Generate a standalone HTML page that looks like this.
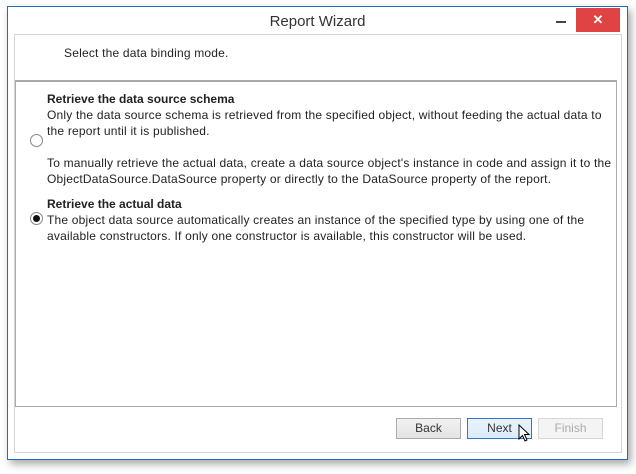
<!DOCTYPE html>
<html><head><style>
body{margin:0;width:636px;height:474px;background:#fff;position:relative;overflow:hidden;font-family:"Liberation Sans",sans-serif;font-size:12px;color:#222}
.win{position:absolute;left:7px;top:6px;width:619px;height:452px;border:1px solid #1a6fc4;background:#fff;box-shadow:3px 4px 8px rgba(0,0,0,.35)}
.title{position:absolute;left:0;right:0;top:6px;text-align:center;font-size:15px;color:#333}
.min{position:absolute;left:548px;top:14px;width:10px;height:2px;background:#444}
.close{position:absolute;left:568px;top:1px;width:44px;height:24px;background:#e04343;color:#fff;text-align:center;font-size:13px;line-height:23px;font-weight:bold}
.frame{position:absolute;left:6px;top:27px;width:606px;height:417px;border:1px solid #d4d4d4;background:#fff}
.head{position:absolute;left:64px;top:46px;font-size:12px;letter-spacing:0.2px}
.panel{position:absolute;left:15px;top:80px;width:600px;height:324px;border:1px solid #ababab;border-top:2px solid #a8a8a8}
.t{position:absolute;left:47px;white-space:nowrap;line-height:16px;letter-spacing:0.2px}
b{font-weight:bold;letter-spacing:0}
.radio{position:absolute;left:30px;width:11px;height:11px;border:1px solid #888;border-radius:50%;background:#fff}
.radio.on::after{content:"";position:absolute;left:2px;top:2px;width:7px;height:7px;border-radius:50%;background:#111}
.btn{position:absolute;top:418px;width:63px;height:19px;border:1px solid #acacac;background:linear-gradient(#f2f2f2,#e3e3e3);text-align:center;line-height:19px;font-size:12px;color:#333}
</style></head><body>
<div class="win">
<div class="title">Report Wizard</div>
<div class="min"></div>
<div class="close">✕</div>
<div class="frame"></div>
</div>
<div class="head">Select the data binding mode.</div>
<div class="panel"></div>
<div class="t" style="top:91px"><b>Retrieve the data source schema</b></div>
<div class="t" style="top:107px">Only the data source schema is retrieved from the specified object, without feeding the actual data to</div>
<div class="t" style="top:123px">the report until it is published.</div>
<div class="t" style="top:155px">To manually retrieve the actual data, create a data source object's instance in code and assign it to the</div>
<div class="t" style="top:171px">ObjectDataSource.DataSource property or directly to the DataSource property of the report.</div>
<div class="t" style="top:196px"><b>Retrieve the actual data</b></div>
<div class="t" style="top:212px">The object data source automatically creates an instance of the specified type by using one of the</div>
<div class="t" style="top:228px">available constructors. If only one constructor is available, this constructor will be used.</div>
<div class="radio" style="top:134px"></div>
<div class="radio on" style="top:212px"></div>
<div class="btn" style="left:396px">Back</div>
<div class="btn" style="left:467px;border-color:#2a7ad0;background:linear-gradient(#eaf3fc,#dcebfb)">Next</div>
<div class="btn" style="left:538px;background:#f4f4f4;border-color:#d6d6d6;color:#aaa">Finish</div>
<svg style="position:absolute;left:518px;top:424px" width="14" height="20" viewBox="0 0 14 20"><path d="M1 1 L1 15 L4.5 11.5 L7 17 L9 16 L6.5 10.5 L11 10.5 Z" fill="#fff" stroke="#000" stroke-width="1"/></svg>
</body></html>
